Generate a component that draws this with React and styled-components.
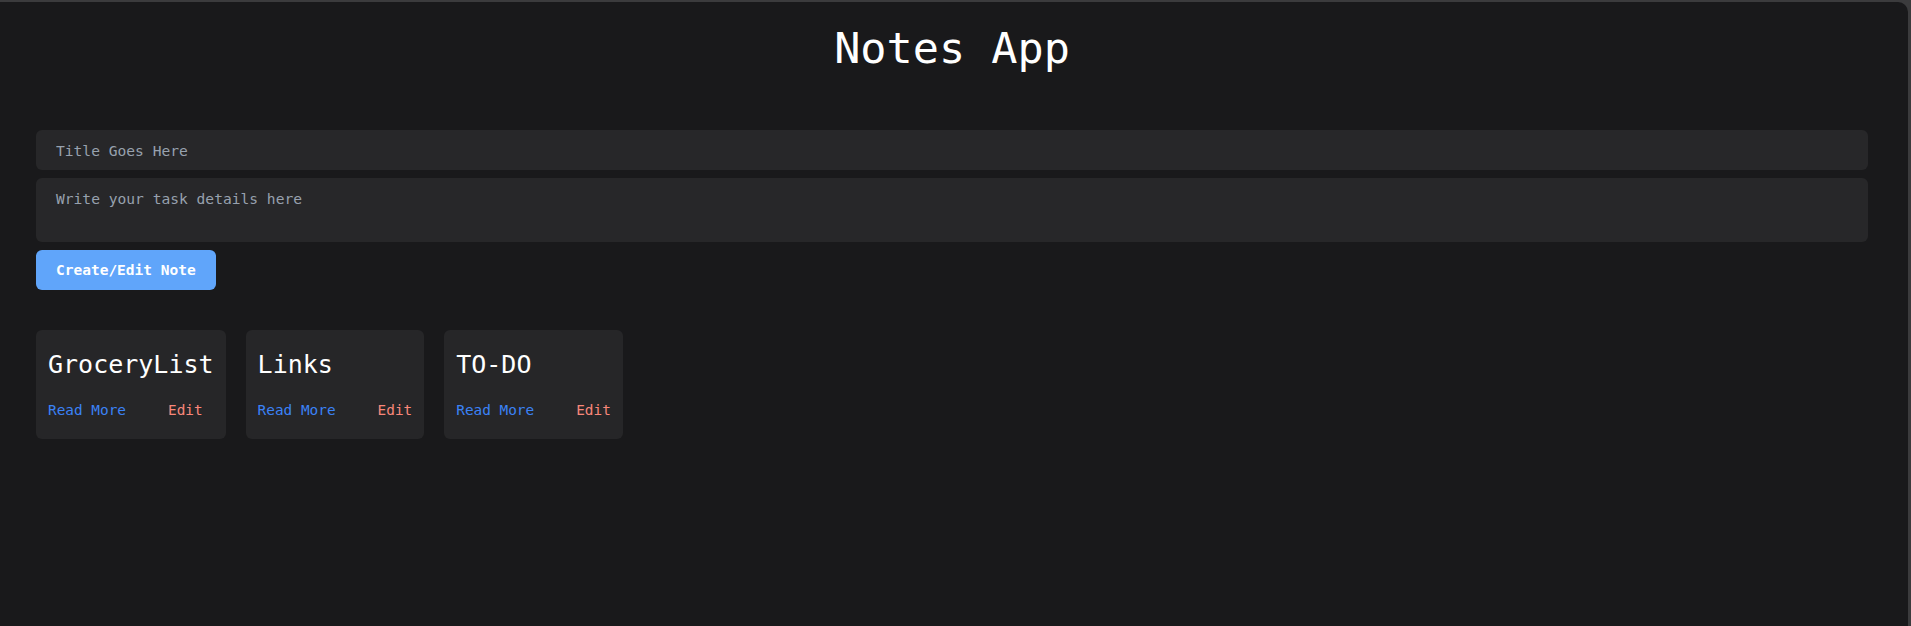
import React, { Component } from 'react';
import styled, { createGlobalStyle } from 'styled-components';

const GlobalStyle = createGlobalStyle`
    body {
        margin: 0;
        background: #3b3b3d;
        font-family: "DejaVu Sans Mono", "Liberation Mono", monospace;
    }
    * {
        box-sizing: border-box;
    }
`

const Frame = styled.div`
    margin: 2px 3px 0 0;
    min-height: calc(100vh - 2px);
    background: #19191b;
    border-top-right-radius: 10px;
    padding: 0 40px 0 36px;
`

const Heading = styled.h1`
    margin: 0;
    padding-top: 21px;
    text-align: center;
    font-size: 43.5px;
    font-weight: normal;
    line-height: normal;
    color: #ffffff;
`

const NoteForm = styled.form`
    margin-top: 57px;
    display: flex;
    flex-direction: column;
    align-items: flex-start;
    gap: 8px;
`

const TitleInput = styled.input`
    width: 100%;
    height: 40px;
    padding: 0 20px;
    border: none;
    border-radius: 6px;
    background: #272729;
    color: #e5e7eb;
    font-family: inherit;
    font-size: 14.6px;
    outline: none;
    &::placeholder {
        color: #97a1ae;
    }
`

const DetailsInput = styled.textarea`
    width: 100%;
    height: 64px;
    padding: 12px 20px;
    border: none;
    border-radius: 6px;
    background: #272729;
    color: #e5e7eb;
    font-family: inherit;
    font-size: 14.6px;
    line-height: normal;
    resize: none;
    outline: none;
    &::placeholder {
        color: #97a1ae;
    }
`

const SubmitButton = styled.button`
    height: 40px;
    padding: 0 20px;
    border: none;
    border-radius: 6px;
    background: #60a5fa;
    color: #ffffff;
    font-family: inherit;
    font-size: 14.5px;
    font-weight: bold;
    cursor: pointer;
`

const NotesList = styled.div`
    margin-top: 40px;
    display: flex;
    align-items: flex-start;
    gap: 20px;
`

const Card = styled.div`
    padding: 20px 12px 21px;
    border-radius: 6px;
    background: #262628;
`

const CardTitle = styled.h2`
    margin: 0 0 22px;
    font-size: 25px;
    font-weight: normal;
    line-height: 30px;
    color: #ffffff;
    white-space: nowrap;
`

const CardActions = styled.div`
    display: flex;
    gap: 42px;
    font-size: 14.4px;
    line-height: normal;
`

const ActionLink = styled.a`
    color: ${props => props.color};
    text-decoration: none;
    cursor: pointer;
    white-space: nowrap;
`

export default class App extends Component {
    constructor(props) {
        super(props);
        this.state = {
            title: '',
            details: '',
            notes: ['GroceryList', 'Links', 'TO-DO'],
        }
    }
    onSubmit = event => {
        event.preventDefault();
    }
    render() {
        return (
            <Frame>
                <GlobalStyle />
                <Heading>Notes App</Heading>
                <NoteForm onSubmit={this.onSubmit}>
                    <TitleInput
                        type="text"
                        placeholder="Title Goes Here"
                        value={this.state.title}
                        onChange={e => this.setState({title: e.target.value})}
                    />
                    <DetailsInput
                        placeholder="Write your task details here"
                        value={this.state.details}
                        onChange={e => this.setState({details: e.target.value})}
                    />
                    <SubmitButton type="submit">Create/Edit Note</SubmitButton>
                </NoteForm>
                <NotesList>
                    {this.state.notes.map(note => (
                        <Card key={note}>
                            <CardTitle>{note}</CardTitle>
                            <CardActions>
                                <ActionLink color="#3b82f6">Read More</ActionLink>
                                <ActionLink color="#f8877a">Edit</ActionLink>
                            </CardActions>
                        </Card>
                    ))}
                </NotesList>
            </Frame>
        );
    }
}
